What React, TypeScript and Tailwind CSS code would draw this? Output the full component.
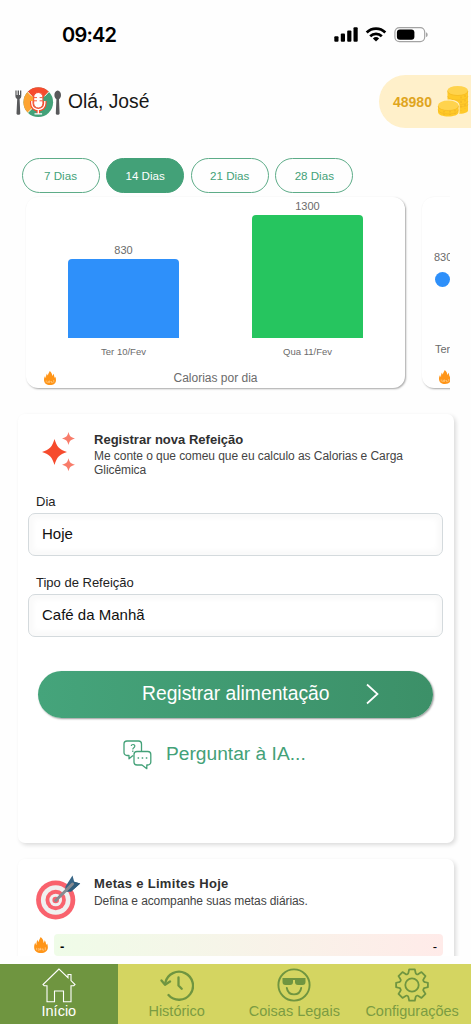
import { useState } from 'react'
import clsx from 'clsx'

const periods = ['7 Dias', '14 Dias', '21 Dias', '28 Dias']

const days = [
  { label: 'Ter 10/Fev', calories: 830, height: 79, color: 'bg-[#2e90fa]' },
  { label: 'Qua 11/Fev', calories: 1300, height: 123, color: 'bg-[#26c55f]' }
]

function StatusIcons() {
  return (
    <svg width="94" height="18" viewBox="0 0 94 18">
      <g fill="#000">
        <rect x="0.3" y="10.2" width="4.2" height="5.6" rx="1" />
        <rect x="6.8" y="7.6" width="4.2" height="8.2" rx="1" />
        <rect x="13.2" y="4.6" width="4.2" height="11.2" rx="1" />
        <rect x="19.5" y="1.2" width="4.2" height="14.6" rx="1" />
      </g>
      <g fill="none" stroke="#000" strokeWidth="2.7">
        <path d="M32.7 6.5a13.2 13.2 0 0 1 18.6 0" />
        <path d="M36.2 10.3a8.3 8.3 0 0 1 11.6 0" />
      </g>
      <path d="M38.9 12.5a4.6 4.6 0 0 1 6.2 0L42 15.6z" fill="#000" />
      <rect
        x="60.9"
        y="1.6"
        width="29.8"
        height="14"
        rx="4.5"
        fill="none"
        stroke="#a3a3a3"
        strokeWidth="1.2"
      />
      <rect x="62.9" y="3.6" width="17.5" height="10.2" rx="3" fill="#000" />
      <path d="M92.1 6.2c2 .9 2 4 0 4.9z" fill="#999" />
    </svg>
  )
}

function Logo() {
  return (
    <svg width="48" height="32" viewBox="0 0 48 32">
      <g fill="#58595b">
        <path d="M.4 4.500h1.200v4.500h1V4.500H4v4.500h1V4.500h1.300v5.500c0 1.700-.9 2.500-1.700 3l.7 14.500c0 1.700-3.800 1.700-3.800 0L2.200 13C1.300 12.500.4 11.700.4 10z" />
        <path d="M42.700 4.500c2 0 3.300 2.200 3.300 4.500 0 2-.8 3.500-2 4.200l.6 14.300c0 1.700-3.800 1.700-3.800 0l.6-14.300c-1.200-.7-2-2.200-2-4.200 0-2.300 1.300-4.500 3.300-4.500z" />
      </g>
      <circle cx="23.300" cy="16.200" r="14.800" fill="#43a178" />
      <path d="M23.300 16.200 12.800 26.700A14.800 14.800 0 0 1 12.800 5.700z" fill="#fda432" />
      <path d="M23.300 16.200 12.800 5.700a14.800 14.800 0 0 1 21 0z" fill="#f64c2e" />
      <path d="M12.500 5.700 17 10.400M34 5.700 29.500 10.400M12.600 26.900l5-5" stroke="#fff" strokeWidth="0.9" />
      <path d="M16.800 15v2.300c0 8.500 13 8.500 13 0V15M23.300 24v3.800" fill="none" stroke="#f64c2e" strokeWidth="3.600" />
      <rect x="18.700" y="6.500" width="9.200" height="15.500" rx="4.600" fill="#fff" stroke="#f64c2e" strokeWidth="1" />
      <path d="M18.900 11.600H22M18.900 14.800H22M24.600 11.600h3.100M24.600 14.800h3.100" stroke="#f64c2e" strokeWidth="0.9" />
      <path d="M16.800 15v2.300c0 8.500 13 8.500 13 0V15M23.300 24v3.800M19.500 27.800h7.600" fill="none" stroke="#fff" strokeWidth="1.300" />
    </svg>
  )
}

function Coins() {
  return (
    <svg width="33" height="34" viewBox="0 0 33 34">
      <path d="M10.500 5.500v20c0 4.500 20.500 4.500 20.500 0v-20z" fill="#ffc928" />
      <ellipse cx="20.700" cy="5.500" rx="10.300" ry="4.600" fill="#ffd34d" />
      <g fill="none" stroke="#eeb224" strokeWidth="0.5">
        <path d="M10.500 6c0 6 20.500 6 20.500 0M10.500 11c0 5.500 20.500 5.500 20.500 0M11 16c0 5 20 5 20 0M18 21.500c5 1 13 0 13-2" />
        <path d="M24 11.500v14M28 10v14" strokeDasharray="2 2.500" strokeWidth="1" />
      </g>
      <path d="M0 20.500v7c0 7 22.500 7 22.500 0v-7c0-8-22.500-8-22.500 0z" fill="#fff0ca" />
      <path d="M1 20.500v6.500c0 6 20.600 6 20.600 0v-6.500z" fill="#ffc928" />
      <ellipse cx="11.300" cy="20.500" rx="10.300" ry="5" fill="#ffd34d" />
      <g fill="none" stroke="#eeb224" strokeWidth="0.5">
        <path d="M1 21c0 6 20.600 6 20.600 0M1 24.500c0 6 20.600 6 20.600 0" />
        <path d="M7 26v4M13 26v4M18 25v4" strokeDasharray="1.500 1.500" strokeWidth="1" />
      </g>
    </svg>
  )
}

function Flame({ className }: { className?: string }) {
  return (
    <svg className={className} viewBox="0 0 24 28">
      <path
        d="M11.500 0c3 2.600 5.200 5.500 4.800 10 1.400-.8 1.900-2.500 1.900-4.500 2.200 2 2 5 3.200 8 .8-.4 1.200-1.200 1.400-2.200 1 3 1.200 5.200 1.200 7C24 24.500 19 28 12 28S0 24.500 0 17.500C0 14.500 1 12 2.200 9.800c.2 2 .7 3.300 1.900 4C4 10 4.500 7.500 6 5c.3 2 .7 3.200 1.800 3.900C8.200 5.500 10 3.500 11.500 0z"
        fill="#ff9518"
      />
      <path d="M4.500 19v4M7 20.500h2v2.500H6.500M11 19v4l2-2.500M15 20v3h2.500M19.500 18v5" fill="none" stroke="#ffe0b3" strokeWidth="1" />
    </svg>
  )
}

function Sparkles() {
  return (
    <svg width="34" height="42" viewBox="0 0 34 42">
      <path d="M12.500 7C15 15.200 17 17.300 25 20c-8 2.700-10 4.800-12.500 13C10 24.800 8 22.700 0 20c8-2.700 10-4.800 12.500-13z" fill="#f64b2d" />
      <g fill="#f87c6a">
        <path d="M26.500 0c1.200 4.300 2.200 5.300 6.500 6.500-4.300 1.200-5.300 2.200-6.500 6.500-1.200-4.300-2.200-5.300-6.500-6.500 4.300-1.200 5.300-2.200 6.500-6.500z" />
        <path d="M26.500 26.200c1.200 4.300 2.200 5.300 6.500 6.500-4.300 1.200-5.300 2.200-6.500 6.500-1.200-4.300-2.200-5.300-6.500-6.500 4.300-1.200 5.300-2.200 6.500-6.500z" />
      </g>
    </svg>
  )
}

function Target() {
  return (
    <svg width="46" height="46" viewBox="0 0 46 46">
      <circle cx="19.700" cy="25" r="19.600" fill="#f9626d" />
      <circle cx="19.700" cy="25" r="14.800" fill="#f0f0f0" />
      <circle cx="19.700" cy="25" r="10.200" fill="#f9626d" />
      <circle cx="19.700" cy="25" r="6.300" fill="#f0f0f0" />
      <circle cx="19.700" cy="25" r="3.300" fill="#f9626d" />
      <path d="M29.500 11.500 36.500.5l1.700 6.300 6 1.700-9 8-6 .5z" fill="#386687" />
      <path d="m38 8 .2-1.200 6 1.700-9 8-5.700-.8z" fill="#2f5d7c" />
      <path d="M19.700 25.500 36.500 9" stroke="#858a91" strokeWidth="3" strokeLinecap="round" />
    </svg>
  )
}

function ChatIcon() {
  return (
    <svg width="29" height="30" viewBox="0 0 29 30" fill="none" stroke="#43a178" strokeWidth="1.300">
      <path d="M10 15.500 6 18.800v-3.300H4a3 3 0 0 1-3-3V4a3 3 0 0 1 3-3h11.500a3 3 0 0 1 3 3v7.500M18.500 11.500h6.300a3 3 0 0 1 3 3v7.500a3 3 0 0 1-3 3h-1v3.700L19 25h-5a3 3 0 0 1-3-3v-7.500a3 3 0 0 1 3-3z" strokeLinejoin="round" />
      <path d="M8.200 6c.2-2 3.800-2 3.600.2-.1 1.600-2 1.400-2 3.200M9.800 10.600v1.300" strokeWidth="1.200" />
      <path d="M14.600 18h1.500M18.700 18h1.500M22.800 18h1.500" />
    </svg>
  )
}

// outline house, the chimney sits on the right slope
function HomeIcon() {
  return (
    <svg width="34" height="35" viewBox="0 0 34 35" fill="none" stroke="#fff" strokeWidth="1.100">
      <path d="M17 1 1 16.500l1.200 1.200H5v16h7.500V23h9v10.700H29v-16h2.800l1.200-1.200-4-3.900V6.500h-3v3.200z" />
    </svg>
  )
}

function HistoryIcon() {
  return (
    <svg width="34" height="34" viewBox="0 0 34 34" fill="none" stroke="#6f9540" strokeWidth="2.300" strokeLinecap="round">
      <path d="M5.400 14.500A14 14 0 1 1 8.500 27" />
      <path d="m1.500 12.500 3.500 4.300 5-3.300M18.500 9.500v8l3.200 3.200" strokeLinejoin="round" />
    </svg>
  )
}

function CoolIcon() {
  return (
    <svg width="34" height="34" viewBox="0 0 34 34">
      <circle cx="17" cy="17" r="15.600" fill="none" stroke="#6f9540" strokeWidth="1.900" />
      <path d="M5.500 10h23v4c0 2-1 3-3 3H21c-2 0-3-1-3-3v-2h-2v2c0 2-1 3-3 3H8.500c-2 0-3-1-3-3z" fill="#6f9540" />
      <path d="M9.800 20c1.500 8.500 12.900 8.500 14.400 0" fill="none" stroke="#6f9540" strokeWidth="1.900" strokeLinecap="round" />
    </svg>
  )
}

function GearIcon() {
  return (
    <svg width="34" height="34" viewBox="0 0 34 34" fill="none" stroke="#6f9540" strokeWidth="1.800" strokeLinejoin="round">
      <circle cx="17" cy="17" r="6.700" />
      <path d="M14.200 1.300h5.600l.8 3.600q.2.900 1.100 1.300.9.500 1.700-.1l3.100-2 4 4-2 3.100q-.6.800-.1 1.700.4.900 1.300 1.100l3.200.8v4.400l-3.200.8q-.9.200-1.300 1.100-.5.900.1 1.700l2 3.100-4 4-3.100-2q-.8-.6-1.700-.1-.9.400-1.100 1.300l-.8 3.600h-5.600l-.8-3.600q-.2-.9-1.100-1.300-.9-.5-1.700.1l-3.100 2-4-4 2-3.100q.6-.8.100-1.700-.4-.9-1.300-1.100l-3.200-.8v-4.400l3.200-.8q.9-.2 1.300-1.100.5-.9-.1-1.700l-2-3.100 4-4 3.100 2q.8.600 1.700.1.900-.4 1.100-1.300z" />
    </svg>
  )
}

function ChartCard() {
  return (
    <div className="flex h-[191px] w-[379px] shrink-0 flex-col rounded-[12px] bg-white shadow-[1px_1px_2px_rgba(0,0,0,0.35)]">
      <div className="flex h-[141px] items-end justify-between px-[42px]">
        {days.map((day) => (
          <div key={day.label} className="flex w-[111px] flex-col items-center">
            <span className="text-[11px] leading-[18px] text-[#6b6b6b]">{day.calories}</span>
            <div className={clsx('w-full rounded-t-[4px]', day.color)} style={{ height: day.height }} />
          </div>
        ))}
      </div>
      <div className="mt-[6px] flex justify-between px-[42px] text-[9.500px] leading-[16px] text-[#6b6b6b]">
        {days.map((day) => (
          <span key={day.label} className="w-[111px] text-center">
            {day.label}
          </span>
        ))}
      </div>
      <div className="mt-[9px] grid h-[18px] grid-cols-[30px_1fr_30px] items-center">
        <Flame className="ml-[18px] h-[14px] w-[12px]" />
        <p className="text-center text-[12px] text-[#6b6b6b]">Calorias por dia</p>
      </div>
    </div>
  )
}

function GlycemicCard() {
  return (
    <div className="flex h-[191px] w-[379px] shrink-0 flex-col rounded-[12px] bg-white pl-[12px] text-[#6b6b6b] shadow-[1px_1px_2px_rgba(0,0,0,0.35)]">
      <span className="mt-[51px] text-[11px] leading-[18px]">830</span>
      <span className="mt-[6px] ml-[1px] size-[15px] rounded-full bg-[#2e90fa]" />
      <span className="mt-[54px] ml-[1px] text-[11px] leading-[16px]">Ter 10/Fev</span>
      <Flame className="mt-[13px] ml-[5px] h-[14px] w-[12px]" />
    </div>
  )
}

function SelectField({ label, value }: { label: string; value: string }) {
  return (
    <label className="flex flex-col">
      <span className="pl-2 text-[13px] leading-[20px] text-[#222]">{label}</span>
      <button className="mt-[1px] h-[43px] rounded-[7px] border border-[#d4dadd] bg-white px-[13px] text-left text-[15px] text-[#111] shadow-[inset_0_0_5px_5px_#fafafa]">
        {value}
      </button>
    </label>
  )
}

const tabs = [
  { label: 'Início', icon: <HomeIcon /> },
  { label: 'Histórico', icon: <HistoryIcon /> },
  { label: 'Coisas Legais', icon: <CoolIcon /> },
  { label: 'Configurações', icon: <GearIcon /> }
]

export default function App() {
  const [period, setPeriod] = useState('14 Dias')
  const [activeTab, setActiveTab] = useState('Início')

  return (
    <div className="flex h-[1024px] w-[471px] flex-col overflow-hidden bg-[#fefefe] font-['Liberation_Sans',Arial,sans-serif]">
      <div className="flex h-[75px] shrink-0 items-start justify-between pl-[62px] pr-[43px] pt-[23px]">
        <span className="font-[Inter,sans-serif] text-[20px] font-semibold leading-6 tracking-[-0.8px] text-black">
          09:42
        </span>
        <div className="mt-[3px]">
          <StatusIcons />
        </div>
      </div>

      <header className="flex h-[53px] shrink-0 items-center justify-between pl-[15px]">
        <div className="flex items-center gap-[5px]">
          <Logo />
          <h1 className="mt-[2px] text-[19.300px] text-[#171717]">Olá, José</h1>
        </div>
        <div className="flex h-[53px] w-[92px] items-center justify-between rounded-l-full bg-[#fff0ca] pl-[14px] pr-[1px]">
          <span className="mt-px text-[14px] font-bold text-[#dfa51e]">48980</span>
          <Coins />
        </div>
      </header>

      <div className="mt-[30px] flex shrink-0 gap-[6.600px] pl-[21.500px]">
        {periods.map((item) => (
          <button
            key={item}
            className={clsx(
              'h-[35px] w-[78px] rounded-full border pt-px text-[11.600px]',
              item === period
                ? 'border-[#43a178] bg-[#43a178] text-white'
                : 'border-[#5dac88] text-[#43a178]'
            )}
            onClick={() => setPeriod(item)}
          >
            {item}
          </button>
        ))}
      </div>

      <div className="mr-[21px] flex h-[199px] shrink-0 gap-[17px] overflow-hidden pl-[26px] pt-1">
        <ChartCard />
        <GlycemicCard />
      </div>

      <main className="mr-[7px] flex h-[564px] shrink-0 flex-col overflow-hidden pl-[18px] pr-[10px] pt-[22px]">
        <section className="h-[429px] shrink-0 rounded-[7px] bg-white pl-[10px] pr-[11px] shadow-[2px_2px_4px_rgba(0,0,0,0.14)]">
          <div className="flex pt-[17px]">
            <div className="ml-[14px] mt-px w-[52px]">
              <Sparkles />
            </div>
            <div className="text-[12px] leading-[14px] tracking-[-0.06px] text-[#444]">
              <h2 className="text-[13px] font-bold leading-[17px] tracking-[0.02px] text-[#303030]">
                Registrar nova Refeição
              </h2>
              <p className="mt-[0.500px] w-[330px]">
                Me conte o que comeu que eu calculo as Calorias e Carga Glicêmica
              </p>
            </div>
          </div>
          <div className="mt-[15px] flex flex-col gap-[17px]">
            <SelectField label="Dia" value="Hoje" />
            <SelectField label="Tipo de Refeição" value="Café da Manhã" />
          </div>
          <button className="ml-[10px] mt-[34px] flex h-[47px] w-[395px] items-center rounded-full bg-linear-to-r from-[#45a47b] to-[#3c9068] pl-[104px] text-[19.300px] text-white shadow-[1px_1px_2px_rgba(0,0,0,0.4)]">
            Registrar alimentação
            <svg className="ml-[36px]" width="13" height="22" viewBox="0 0 13 22" fill="none" stroke="#fff" strokeWidth="1.700">
              <path d="m1 1.500 10.500 9.500L1 20.500" />
            </svg>
          </button>
          <button className="ml-[95px] mt-[22px] flex items-center gap-[14px] text-[19.200px] text-[#43a178]">
            <ChatIcon />
            Perguntar à IA...
          </button>
        </section>

        <section className="mt-[16px] h-[180px] shrink-0 rounded-[7px] bg-white pl-[10px] pr-[11px] shadow-[2px_2px_4px_rgba(0,0,0,0.14)]">
          <div className="flex pt-[16px]">
            <div className="ml-2 w-[58px]">
              <Target />
            </div>
            <div className="text-[12px] leading-[16px] tracking-[-0.1px] text-[#444]">
              <h2 className="text-[13px] font-bold leading-[18px] tracking-[0.3px] text-[#303030]">
                Metas e Limites Hoje
              </h2>
              <p>Defina e acompanhe suas metas diárias.</p>
            </div>
          </div>
          <div className="mt-[13px] flex items-center gap-[6px] pl-[6px]">
            <Flame className="h-[16px] w-[14px]" />
            <div className="flex h-[22px] flex-1 items-center justify-between rounded-[4px] bg-linear-to-r from-[#effce8] to-[#ffebe9] px-[6px] pt-[3px] text-[13px] text-black">
              <span className="font-bold">-</span>
              <span>-</span>
            </div>
          </div>
        </section>
      </main>

      <nav className="mt-[8px] grid h-[60px] shrink-0 grid-cols-4 bg-[#d4d561]">
        {tabs.map((tab) => (
          <button
            key={tab.label}
            className={clsx(
              'flex flex-col items-center whitespace-nowrap pt-[4px] text-[14.500px] leading-[19px]',
              tab.label === activeTab ? 'bg-[#6f9540] text-white' : 'text-[#7b9c42]'
            )}
            onClick={() => setActiveTab(tab.label)}
          >
            <span className="flex h-[34px] items-center">{tab.icon}</span>
            {tab.label}
          </button>
        ))}
      </nav>
    </div>
  )
}
